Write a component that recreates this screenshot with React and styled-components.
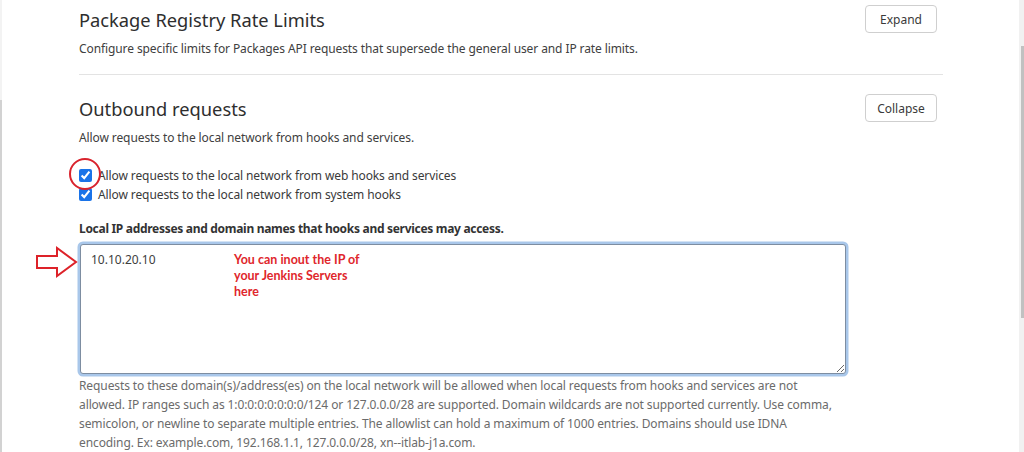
import React from "react";
import styled, { createGlobalStyle } from "styled-components";

const GlobalStyle = createGlobalStyle`
 html, body {
  margin: 0;
  padding: 0;
  background: #ffffff;
 }
 body {
  font-family: "Noto Sans", "Open Sans", sans-serif;
  color: #333333;
  overflow: hidden;
 }
`;

const Page = styled.div`
 display: flex;
 width: 1024px;
 height: 452px;
 overflow: hidden;
`;

const Rail = styled.div`
 flex: 0 0 2px;
 background: linear-gradient(#f3f3f3 0 100px, #d2d2d2 100px);
`;

const Content = styled.main`
 flex: 1;
 padding-left: 77px;
`;

const Column = styled.div`
 width: 864px;
`;

const Scrollbar = styled.div`
 flex: 0 0 5px;
 background: #f1f1f1;
 display: flex;
 justify-content: flex-end;
`;

const Thumb = styled.div`
 width: 3px;
 height: 272px;
 margin-top: 46px;
 background: #c1c1c1;
`;

const Section = styled.section`
 padding-top: ${(p) => p.$top}px;
 padding-bottom: 15px;
 border-bottom: ${(p) => (p.$divider ? "1px solid #e3e3e3" : "none")};
`;

const HeaderRow = styled.div`
 display: flex;
 justify-content: space-between;
 align-items: center;
 height: 28px;
 padding-right: 6px;
`;

const Title = styled.h4`
 margin: 0;
 padding-top: 2px;
 font-size: 18.3px;
 font-weight: 400;
 line-height: 28px;
 color: #2e2e2e;
`;

const ToggleButton = styled.button`
 width: 72px;
 height: 28px;
 padding: 0;
 background: #ffffff;
 border: 1px solid #cfcfcf;
 border-radius: 4px;
 font-family: inherit;
 font-size: 12px;
 color: #3a3a3a;
`;

const Description = styled.p`
 margin: 6px 0 0;
 font-size: 12px;
 letter-spacing: -0.1px;
 line-height: 20px;
 color: #404040;
`;

const Checks = styled.div`
 margin-top: 18px;
 position: relative;
`;

const CheckRow = styled.label`
 display: flex;
 align-items: center;
 gap: 6px;
 height: 19px;
 font-size: 12px;
 letter-spacing: -0.1px;
 color: #3a3a3a;

 input {
  margin: 0;
  width: 13px;
  height: 13px;
  accent-color: #1a73e8;
 }
`;

const Ring = styled.span`
 position: absolute;
 left: -10px;
 top: -8px;
 width: 28px;
 height: 28px;
 border: 2px solid #d9232d;
 border-radius: 50%;
 pointer-events: none;
`;

const FieldLabel = styled.div`
 margin-top: 15px;
 font-size: 12px;
 font-weight: 700;
 letter-spacing: -0.3px;
 line-height: 20px;
 color: #333333;
`;

const FieldWrap = styled.div`
 position: relative;
 width: 768px;
 margin-top: 5px;
`;

const Area = styled.textarea`
 display: block;
 box-sizing: border-box;
 width: 766px;
 height: 130px;
 margin-left: 1px;
 padding: 5px 10px;
 border: 1px solid #7d8da1;
 border-radius: 3px;
 box-shadow: 0 0 0 2.5px #a9c7ea;
 outline: none;
 font-family: inherit;
 font-size: 12px;
 line-height: 20px;
 color: #404040;
 resize: vertical;
`;

const Note = styled.div`
 position: absolute;
 left: 155px;
 top: 8px;
 width: 130px;
 font-family: "Lato", "Open Sans", sans-serif;
 font-size: 12.5px;
 font-weight: 700;
 line-height: 16px;
 color: #e0262c;
 pointer-events: none;
`;

const Arrow = styled.svg`
 position: absolute;
 left: -44px;
 top: 1px;
`;

const Help = styled.p`
 width: 760px;
 margin: 2px 0 0;
 font-size: 12px;
 letter-spacing: -0.1px;
 line-height: 19px;
 color: #6b6b6b;
`;

const App = () => {
 return (
  <>
   <GlobalStyle />
   <Page>
    <Rail />
    <Content>
     <Column>
      <Section $top={5} $divider>
       <HeaderRow>
        <Title>Package Registry Rate Limits</Title>
        <ToggleButton>Expand</ToggleButton>
       </HeaderRow>
       <Description>
        Configure specific limits for Packages API requests that supersede the general user and IP rate limits.
       </Description>
      </Section>
      <Section $top={19}>
       <HeaderRow>
        <Title>Outbound requests</Title>
        <ToggleButton>Collapse</ToggleButton>
       </HeaderRow>
       <Description>Allow requests to the local network from hooks and services.</Description>
       <Checks>
        <CheckRow>
         <input type="checkbox" defaultChecked />
         Allow requests to the local network from web hooks and services
        </CheckRow>
        <CheckRow>
         <input type="checkbox" defaultChecked />
         Allow requests to the local network from system hooks
        </CheckRow>
        <Ring />
       </Checks>
       <FieldLabel>Local IP addresses and domain names that hooks and services may access.</FieldLabel>
       <FieldWrap>
        <Area defaultValue="10.10.20.10" />
        <Note>You can inout the IP of your Jenkins Servers here</Note>
        <Arrow width="44" height="34" viewBox="0 0 44 34">
         <path
          d="M2 11 L22 11 L22 3 L41 17 L22 31 L22 23 L2 23 Z"
          fill="none"
          stroke="#dd2229"
          strokeWidth="2"
          strokeLinejoin="miter"
         />
        </Arrow>
       </FieldWrap>
       <Help>
        Requests to these domain(s)/address(es) on the local network will be allowed when local requests from hooks and services are not allowed. IP ranges such as 1:0:0:0:0:0:0:0/124 or 127.0.0.0/28 are supported. Domain wildcards are not supported currently. Use comma, semicolon, or newline to separate multiple entries. The allowlist can hold a maximum of 1000 entries. Domains should use IDNA encoding. Ex: example.com, 192.168.1.1, 127.0.0.0/28, xn--itlab-j1a.com.
       </Help>
      </Section>
     </Column>
    </Content>
    <Scrollbar>
     <Thumb />
    </Scrollbar>
   </Page>
  </>
 );
};

export default App;
